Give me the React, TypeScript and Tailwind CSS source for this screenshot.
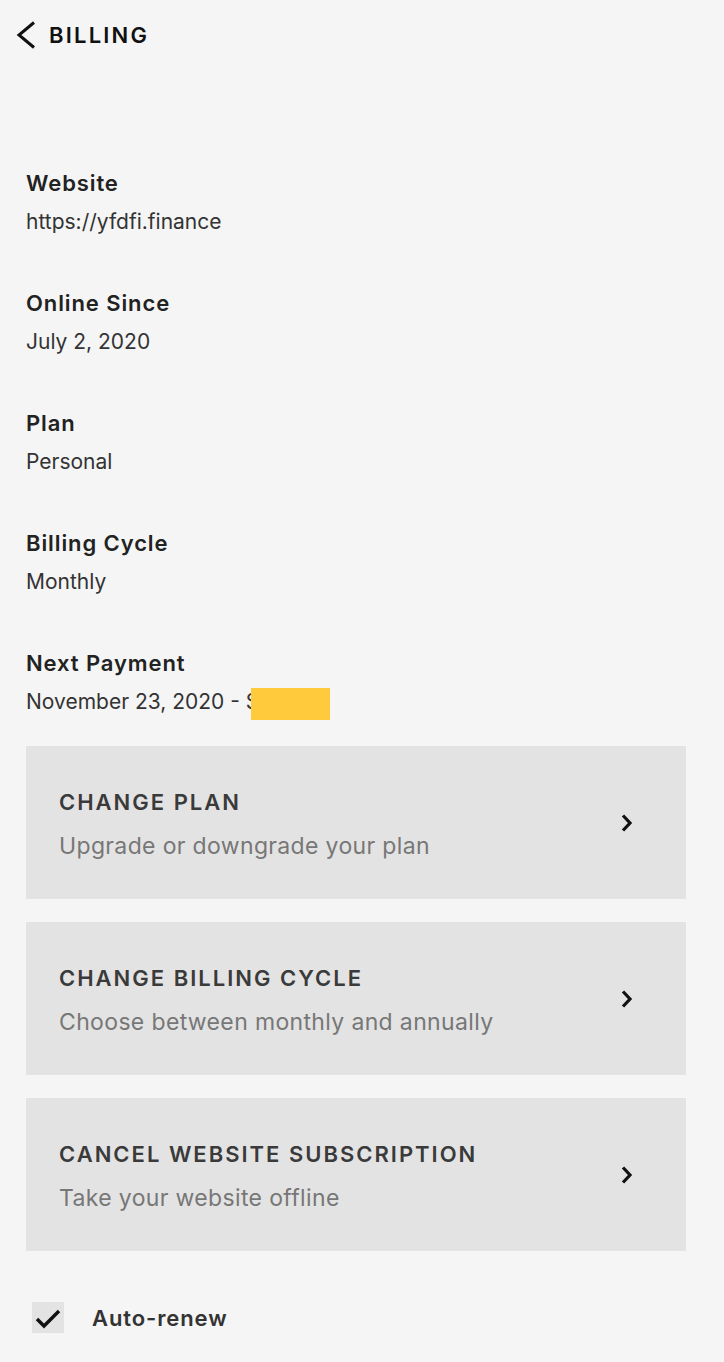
import React from "react";

const details = [
  { label: "Website", value: "https://yfdfi.finance" },
  { label: "Online Since", value: "July 2, 2020" },
  { label: "Plan", value: "Personal" },
  { label: "Billing Cycle", value: "Monthly" },
];

const actions = [
  { title: "CHANGE PLAN", text: "Upgrade or downgrade your plan" },
  { title: "CHANGE BILLING CYCLE", text: "Choose between monthly and annually" },
  { title: "CANCEL WEBSITE SUBSCRIPTION", text: "Take your website offline" },
];

const Chevron = () => (
  <svg width="14" height="20" viewBox="0 0 14 20" className="shrink-0">
    <path d="M3 2.5 L10 10 L3 17.5" fill="none" stroke="#111" strokeWidth="3.2" strokeLinejoin="miter" />
  </svg>
);

export default function App() {
  return (
    <div
      className="min-h-[1362px] w-full bg-[#f5f5f5] text-[#222]"
      style={{ fontFamily: "Inter, 'Liberation Sans', sans-serif" }}
    >
      <header className="flex h-[70px] items-center gap-[13px] pl-[16px]">
        <svg width="20" height="28" viewBox="0 0 20 28">
          <path d="M18 1.5 L3 14 L18 26.5" fill="none" stroke="#111" strokeWidth="3" />
        </svg>
        <span className="text-[22px] font-semibold leading-7 tracking-[2.2px] text-[#111]">BILLING</span>
      </header>

      <main className="flex flex-col pl-[26px] pr-[38px] pt-[99px]">
        <div className="flex flex-col gap-[53px]">
          {details.map((d) => (
            <div key={d.label} className="flex flex-col gap-[11px]">
              <div className="text-[22px] font-semibold leading-7 tracking-[0.9px] text-[#222]">{d.label}</div>
              <div className="text-[21px] leading-7 text-[#333]">{d.value}</div>
            </div>
          ))}
          <div className="flex flex-col gap-[11px]">
            <div className="text-[22px] font-semibold leading-7 tracking-[0.9px] text-[#222]">Next Payment</div>
            <div className="relative w-fit text-[21px] leading-7 text-[#333]">
              November 23, 2020 - $
              <span className="absolute left-[225px] top-0 h-[32px] w-[79px] bg-[#ffcb3d]" />
            </div>
          </div>
        </div>

        <div className="mt-[30px] flex flex-col gap-[23px]">
          {actions.map((a) => (
            <div
              key={a.title}
              className="flex h-[153px] items-center justify-between bg-[#e3e3e3] pl-[33px] pr-[52px]"
            >
              <div className="flex flex-col gap-[16px] pt-[3px]">
                <div className="text-[22px] font-semibold leading-7 tracking-[2px] text-[#3a3a3a]">{a.title}</div>
                <div className="text-[23px] leading-7 tracking-[0.35px] text-[#777]">{a.text}</div>
              </div>
              <Chevron />
            </div>
          ))}
        </div>

        <label className="mt-[51px] flex items-center gap-[28px] pl-[6px]">
          <span className="flex h-[31px] w-[32px] items-center justify-center bg-[#e3e3e3]">
            <svg width="28" height="24" viewBox="0 0 28 24">
              <path d="M3 13 L10 20 L25 5" fill="none" stroke="#111" strokeWidth="3.4" />
            </svg>
          </span>
          <span className="text-[22px] font-semibold leading-7 tracking-[0.9px] text-[#333]">Auto-renew</span>
        </label>
      </main>
    </div>
  );
}
